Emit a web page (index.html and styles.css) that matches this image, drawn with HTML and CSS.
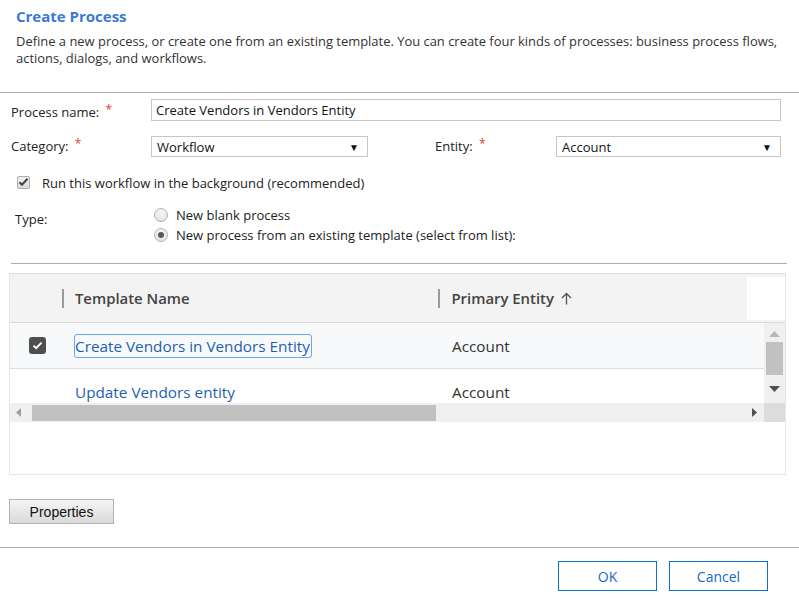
FILE: index.html
```html
<!DOCTYPE html>
<html>
<head>
<meta charset="utf-8">
<link rel="stylesheet" href="styles.css">
</head>
<body>
<div class="dialog">
  <header class="intro">
    <h1 class="title">Create Process</h1>
    <p class="desc">Define a new process, or create one from an existing template. You can create four kinds of processes: business process flows,<br>actions, dialogs, and workflows.</p>
  </header>
  <div class="rule"></div>

  <section class="form">
    <div class="row row-name">
      <div class="lbl">Process name: <span class="req">*</span></div>
      <div class="input">Create Vendors in Vendors Entity</div>
    </div>

    <div class="row row-cat">
      <div class="lbl">Category: <span class="req">*</span></div>
      <div class="select sel-cat"><span>Workflow</span><span class="arrow">▼</span></div>
      <div class="lbl lbl-entity">Entity: <span class="req">*</span></div>
      <div class="select sel-ent"><span>Account</span><span class="arrow">▼</span></div>
    </div>

    <div class="row row-bg">
      <span class="chk-dis">
        <svg width="11" height="10" viewBox="0 0 11 10"><path d="M1.5 5.2 L4 7.8 L9.5 1.8" fill="none" stroke="#444" stroke-width="2"/></svg>
      </span>
      <span class="bg-text">Run this workflow in the background (recommended)</span>
    </div>

    <div class="row row-type">
      <div class="lbl lbl-type">Type:</div>
      <div class="radios">
        <div class="radio-row"><span class="radio"></span><span>New blank process</span></div>
        <div class="radio-row"><span class="radio on"><span class="dot"></span></span><span>New process from an existing template (select from list):</span></div>
      </div>
    </div>
  </section>

  <div class="rule rule-inner"></div>

  <section class="grid">
    <div class="grid-head">
      <div class="gh-check"></div>
      <div class="gh-col gh-name"><span class="sep"></span><span>Template Name</span></div>
      <div class="gh-col gh-entity"><span class="sep"></span><span>Primary Entity</span>
        <svg class="sort" width="11" height="13" viewBox="0 0 11 13"><path d="M5.5 12.5 V1.5 M1 6 L5.5 1.5 L10 6" fill="none" stroke="#555" stroke-width="1.3"/></svg>
      </div>
      <div class="gh-blank"></div>
    </div>

    <div class="grid-body">
      <div class="rows">
        <div class="grow sel">
          <div class="gc-check">
            <span class="chk-dark"><svg width="11" height="9" viewBox="0 0 11 9"><path d="M1.5 4.6 L4.2 7.2 L9.5 1.6" fill="none" stroke="#fff" stroke-width="2"/></svg></span>
          </div>
          <div class="gc-name"><a class="link focus">Create Vendors in Vendors Entity</a></div>
          <div class="gc-entity">Account</div>
        </div>
        <div class="grow">
          <div class="gc-check"></div>
          <div class="gc-name"><a class="link">Update Vendors entity</a></div>
          <div class="gc-entity">Account</div>
        </div>
      </div>
      <div class="vscroll">
        <svg class="up" width="11" height="6" viewBox="0 0 11 6"><path d="M0 6 L5.5 0 L11 6 Z" fill="#b8b8b8"/></svg>
        <div class="vthumb"></div>
        <svg class="down" width="11" height="6" viewBox="0 0 11 6"><path d="M0 0 L5.5 6 L11 0 Z" fill="#505050"/></svg>
      </div>
    </div>

    <div class="hscroll">
      <div class="htrack">
        <svg class="left" width="5" height="9" viewBox="0 0 5 9"><path d="M5 0 L0 4.5 L5 9 Z" fill="#a0a0a0"/></svg>
        <div class="hthumb"></div>
        <svg class="right" width="5" height="9" viewBox="0 0 5 9"><path d="M0 0 L5 4.5 L0 9 Z" fill="#505050"/></svg>
      </div>
      <div class="corner"></div>
    </div>
  </section>

  <div class="props-wrap"><button class="props">Properties</button></div>

  <div class="rule"></div>

  <footer class="actions">
    <button class="btn">OK</button>
    <button class="btn">Cancel</button>
  </footer>
</div>
</body>
</html>
```

FILE: styles.css
```css
* { box-sizing: border-box; }
html, body { margin: 0; padding: 0; background: #fff; }
body {
  width: 799px;
  height: 598px;
  overflow: hidden;
  font-family: "Open Sans", "Noto Sans", sans-serif;
  color: #222;
  font-size: 13px;
}

.intro { padding: 7px 16px 0; height: 92px; }
.title {
  margin: 0;
  font-size: 15px;
  line-height: 18px;
  font-weight: 700;
  color: #3b79d8;
}
.desc {
  margin: 8px 0 0;
  font-size: 12.95px;
  line-height: 17px;
  color: #333;
}

.rule { height: 1px; background: #acacb4; }
.rule-inner { margin: 18px 12px 0 11px; }

.form { padding-left: 11px; }
.row { display: flex; align-items: center; }
.lbl { width: 140px; color: #222; line-height: 18px; }
.req { color: #e0393e; font-size: 12px; position: relative; top: -3px; margin-left: 3px; }

.row-name { margin-top: 6px; height: 22px; }
.row-name .lbl { padding-top: 5px; }
.input {
  width: 630px;
  height: 22px;
  border: 1px solid #c6c6c6;
  padding: 0 4px;
  line-height: 20px;
  color: #111;
}

.row-cat { margin-top: 15px; height: 21px; }
.select {
  height: 21px;
  border: 1px solid #c6c6c6;
  display: flex;
  align-items: center;
  justify-content: space-between;
  padding: 0 8px 0 5px;
  color: #111;
}
.sel-cat { width: 217px; }
.sel-ent { width: 225px; }
.lbl-entity { width: 121px; margin-left: 67px; }
.arrow { font-size: 10px; color: #111; }

.row-bg { margin-top: 18px; height: 16px; }
.chk-dis {
  width: 13px;
  height: 13px;
  margin-left: 6px;
  margin-top: -2px;
  border: 1px solid #adadad;
  border-radius: 2px;
  background: linear-gradient(#f0f0f0, #dcdcdc);
  display: flex;
  align-items: center;
  justify-content: center;
}
.bg-text { margin-left: 12px; }

.row-type { margin-top: 14px; align-items: flex-start; }
.lbl-type { width: 139px; margin-left: 4px; padding-top: 5px; }
.radios { display: flex; flex-direction: column; }
.radio-row { height: 20px; display: flex; align-items: center; }
.radio-row > span:last-child { margin-left: 8px; }
.radio {
  width: 14px;
  height: 14px;
  border-radius: 50%;
  border: 1px solid #b4b4b4;
  background: radial-gradient(circle at 50% 35%, #f6f6f6, #dedede);
  display: flex;
  align-items: center;
  justify-content: center;
}
.dot { width: 6px; height: 6px; border-radius: 50%; background: #5a5a5a; }

.grid {
  margin: 9px 0 0 9px;
  width: 777px;
  height: 202px;
  border: 1px solid #e6e6e6;
  border-top-color: #dcdcdc;
}
.grid-head {
  height: 49px;
  background: #f3f3f3;
  border-bottom: 1px solid #dadada;
  display: flex;
  align-items: center;
  font-weight: 600;
  color: #444;
  font-size: 14.9px;
}
.gh-check { width: 52px; }
.gh-col { display: flex; align-items: center; }
.gh-name { width: 377px; }
.gh-entity { width: 309px; }
.sep { width: 2px; height: 19px; background: #9a9a9a; margin-right: 11px; }
.sort { margin-left: 7px; }
.gh-blank { width: 38px; height: 43px; background: #fff; align-self: center; }

.grid-body { display: flex; height: 80px; overflow: hidden; }
.rows { width: 755px; }
.grow {
  height: 46px;
  display: flex;
  align-items: center;
  font-size: 15.3px;
  border-bottom: 1px solid #dedede;
}
.grow.sel { background: #f8f9fb; }
.gc-check { width: 52px; display: flex; justify-content: center; padding-left: 2px; }
.gc-name { width: 377px; padding-left: 13px; }
.gc-entity { color: #333; padding-left: 13px; }
.chk-dark {
  width: 17px;
  height: 17px;
  border-radius: 3px;
  background: #4f4f4f;
  display: flex;
  align-items: center;
  justify-content: center;
}
.link { color: #1e5fb3; text-decoration: none; padding: 1px 0; }
.link.focus { outline: 1px solid #6aa4f2; outline-offset: 0; border-radius: 2px; padding: 1px 1px 1px 0; }

.vscroll {
  width: 21px;
  background: #f0f0f0;
  display: flex;
  flex-direction: column;
  align-items: center;
}
.vscroll .up { margin-top: 8px; }
.vthumb { width: 17px; height: 33px; background: #c1c1c1; margin-top: 5px; }
.vscroll .down { margin-top: 11px; }

.hscroll { display: flex; height: 19px; }
.htrack {
  width: 755px;
  background: #f0f0f0;
  display: flex;
  align-items: center;
  padding-left: 6px;
}
.hthumb { width: 404px; height: 16px; background: #c1c1c1; margin-left: 11px; }
.htrack .right { margin-left: 316px; }
.corner { width: 21px; background: #dcdcdc; }

.props-wrap { padding: 24px 0 0 9px; height: 72px; }
.props {
  width: 105px;
  height: 25px;
  font-family: "Liberation Sans", Arial, sans-serif;
  font-size: 14px;
  color: #111;
  border: 1px solid #b3b3b3;
  background: linear-gradient(#f5f5f5, #d9d9d9);
  padding: 0;
  border-radius: 0;
}

.actions {
  display: flex;
  justify-content: flex-end;
  gap: 12px;
  padding: 13px 31px 0 0;
}
.btn {
  width: 99px;
  height: 30px;
  border: 1px solid #0a74d4;
  background: #fff;
  color: #2266c8;
  font-family: "Open Sans", "Noto Sans", sans-serif;
  font-size: 14px;
  padding: 0;
}
```
